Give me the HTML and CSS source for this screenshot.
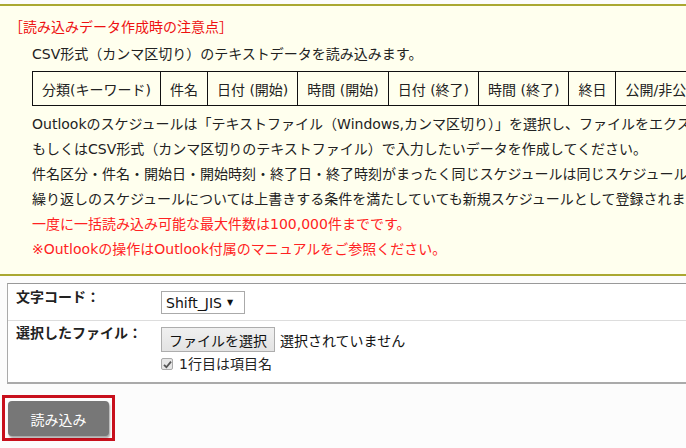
FILE: index.html
```html
<!DOCTYPE html>
<html lang="ja">
<head>
<meta charset="utf-8">
<link rel="stylesheet" href="styles.css">
</head>
<body>
<div class="page">
  <section class="notice">
    <h2 class="notice-title">［読み込みデータ作成時の注意点］</h2>
    <div class="notice-body">
      <p>CSV形式（カンマ区切り）のテキストデータを読み込みます。</p>
      <table class="cols">
        <tr>
          <td>分類(キーワード)</td>
          <td>件名</td>
          <td>日付 (開始)</td>
          <td>時間 (開始)</td>
          <td>日付 (終了)</td>
          <td>時間 (終了)</td>
          <td>終日</td>
          <td>公開/非公開</td>
        </tr>
      </table>
      <p class="after-table">Outlookのスケジュールは「テキストファイル（Windows,カンマ区切り）」を選択し、ファイルをエクスポートしてください。</p>
      <p>もしくはCSV形式（カンマ区切りのテキストファイル）で入力したいデータを作成してください。</p>
      <p>件名区分・件名・開始日・開始時刻・終了日・終了時刻がまったく同じスケジュールは同じスケジュールとみなされます。</p>
      <p>繰り返しのスケジュールについては上書きする条件を満たしていても新規スケジュールとして登録されます。</p>
      <p class="warn">一度に一括読み込み可能な最大件数は100,000件までです。</p>
      <p class="warn">※Outlookの操作はOutlook付属のマニュアルをご参照ください。</p>
    </div>
  </section>

  <section class="form">
    <div class="row row-first">
      <div class="label">文字コード：</div>
      <div class="value">
        <span class="select">Shift_JIS <span class="arrow">▼</span></span>
      </div>
    </div>
    <div class="row">
      <div class="label">選択したファイル：</div>
      <div class="value">
        <div class="file-line">
          <span class="file-btn">ファイルを選択</span>
          <span class="file-none">選択されていません</span>
        </div>
        <label class="check-line">
          <span class="checkbox"><svg width="9" height="9" viewBox="0 0 9 9"><path d="M1 4.8 L3.4 7.2 L8 1.6" fill="none" stroke="#555" stroke-width="1.8"/></svg></span>
          <span>1行目は項目名</span>
        </label>
      </div>
    </div>
  </section>

  <div class="actions">
    <div class="highlight">
      <span class="submit">読み込み</span>
    </div>
  </div>
</div>
</body>
</html>
```

FILE: styles.css
```css
html, body {
  margin: 0;
  padding: 0;
  overflow: hidden;
  background: #fcfcfc;
}
body {
  font-family: "DejaVu Sans", "Noto Sans CJK JP", sans-serif;
  font-size: 14px;
  color: #222;
}
.page {
  width: 1000px;
  padding-top: 4px;
}
.notice {
  background: #ffffee;
  border-top: 2px solid #aaa832;
  border-bottom: 2px solid #aaa832;
  padding: 9px 0 12px 0;
}
.notice-title {
  margin: 0 0 3px 9px;
  font-size: 14px;
  font-weight: normal;
  color: #ee1111;
  line-height: 24px;
}
.notice-body {
  padding-left: 32px;
}
.notice-body p {
  margin: 0;
  line-height: 25px;
  white-space: nowrap;
}
.notice-body p.after-table {
  margin-top: 6px;
}
.notice-body p.warn {
  color: #ff2222;
}
.cols {
  border-collapse: collapse;
  margin-top: 4px;
  white-space: nowrap;
}
.cols td {
  border: 1px solid #111;
  height: 33px;
  padding: 0 9px;
}
.form {
  margin: 7px 0 0 7px;
  background: #fff;
  border-top: 1px solid #999;
  border-left: 1px solid #aaa;
  border-bottom: 2px solid #aaa;
}
.row {
  display: flex;
  border-top: 1px solid #ddd;
  padding: 6px 0 8px 8px;
}
.row-first {
  border-top: none;
  padding-top: 7px;
  padding-bottom: 6px;
}
.label {
  width: 145px;
  font-weight: bold;
  line-height: 14px;
  margin-top: -1px;
  color: #222;
}
.select {
  display: inline-flex;
  align-items: center;
  box-sizing: border-box;
  height: 23px;
  width: 84px;
  padding-left: 4px;
  border: 1px solid #aaa;
  background: #fff;
  color: #111;
  font-size: 14px;
}
.arrow {
  font-size: 8px;
  margin-left: 5px;
}
.file-line {
  display: flex;
  align-items: center;
  gap: 5px;
}
.file-btn {
  box-sizing: border-box;
  height: 25px;
  width: 114px;
  display: inline-flex;
  align-items: center;
  justify-content: center;
  border: 1px solid #adadad;
  background: linear-gradient(#f0f0f0, #e3e3e3);
  color: #111;
}
.file-none {
  color: #111;
}
.check-line {
  display: flex;
  align-items: center;
  gap: 6px;
  margin-top: 2px;
  color: #222;
  line-height: 20px;
}
.checkbox {
  box-sizing: border-box;
  width: 12px;
  height: 12px;
  border: 1px solid #aaa;
  border-radius: 2px;
  background: #e6e6e6;
  display: inline-flex;
  align-items: center;
  justify-content: center;
}
.actions {
  padding: 11px 0 0 2px;
}
.highlight {
  display: inline-block;
  border: 3px solid #c8101c;
  padding: 3px 3px 2px 3px;
}
.submit {
  display: flex;
  align-items: center;
  justify-content: center;
  width: 101px;
  height: 35px;
  background: #777;
  color: #fff;
  border-radius: 4px;
  box-shadow: 1px 2px 2px rgba(0,0,0,0.35);
}
```
